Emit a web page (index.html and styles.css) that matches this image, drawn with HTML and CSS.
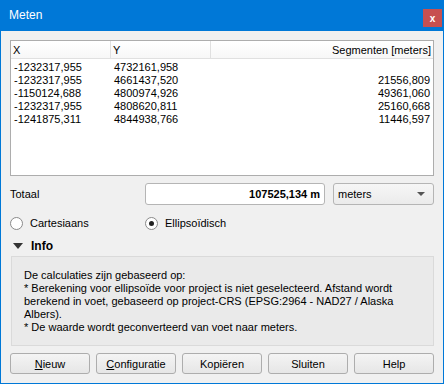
FILE: index.html
```html
<!DOCTYPE html>
<html>
<head>
<meta charset="utf-8">
<link rel="stylesheet" href="styles.css">
</head>
<body>
<div class="window">
  <div class="titlebar">
    <span class="title">Meten</span>
    <span class="close">x</span>
  </div>
  <div class="content">
    <div class="table">
      <div class="thead">
        <div class="th c1">X</div>
        <div class="th c2">Y</div>
        <div class="th c3">Segmenten [meters]</div>
      </div>
      <div class="tbody">
        <div class="tr"><div class="td c1">-1232317,955</div><div class="td c2">4732161,958</div><div class="td c3"></div></div>
        <div class="tr"><div class="td c1">-1232317,955</div><div class="td c2">4661437,520</div><div class="td c3">21556,809</div></div>
        <div class="tr"><div class="td c1">-1150124,688</div><div class="td c2">4800974,926</div><div class="td c3">49361,060</div></div>
        <div class="tr"><div class="td c1">-1232317,955</div><div class="td c2">4808620,811</div><div class="td c3">25160,668</div></div>
        <div class="tr"><div class="td c1">-1241875,311</div><div class="td c2">4844938,766</div><div class="td c3">11446,597</div></div>
      </div>
    </div>

    <div class="total-row">
      <span class="total-label">Totaal</span>
      <div class="total-box">107525,134 m</div>
      <div class="combo"><span>meters</span><span class="arrow"></span></div>
    </div>

    <div class="radio-row">
      <label class="radio r1"><span class="circle"></span>Cartesiaans</label>
      <label class="radio"><span class="circle checked"></span>Ellipsoïdisch</label>
    </div>

    <div class="info-head"><span class="tri"></span><span class="info-title">Info</span></div>
    <div class="info-box">
      De calculaties zijn gebaseerd op:<br>
      * Berekening voor ellipsoïde voor project is niet geselecteerd. Afstand wordt berekend in voet, gebaseerd op project-CRS (EPSG:2964 - NAD27 / Alaska Albers).<br>
      * De waarde wordt geconverteerd van voet naar meters.
    </div>

    <div class="buttons">
      <button class="btn"><u>N</u>ieuw</button>
      <button class="btn"><u>C</u>onfiguratie</button>
      <button class="btn">Kopiëren</button>
      <button class="btn">Sluiten</button>
      <button class="btn">Help</button>
    </div>
  </div>
</div>
</body>
</html>
```
FILE: styles.css
```css
html, body {
  margin: 0;
  padding: 0;
  background: #f0f0f0;
}
body {
  font-family: "Liberation Sans", Arial, sans-serif;
  font-size: 11px;
  color: #000;
}
.window {
  width: 444px;
  height: 384px;
  box-sizing: border-box;
  border: 1px solid #0078d7;
  border-top: none;
  background: #f0f0f0;
  display: flex;
  flex-direction: column;
}
.titlebar {
  height: 31px;
  background: #0078d7;
  margin: 0 -1px;
  position: relative;
  display: flex;
  align-items: center;
}
.title {
  color: #fff;
  font-size: 12px;
  margin-left: 9px;
  margin-top: -1px;
}
.close {
  position: absolute;
  left: 423px;
  top: 9px;
  width: 19px;
  height: 18px;
  background: #c75050;
  color: #fff;
  font-weight: bold;
  font-size: 10px;
  display: flex;
  align-items: center;
  justify-content: center;
}
.content {
  padding: 9px 9px 0 9px;
  display: flex;
  flex-direction: column;
}
.table {
  height: 136px;
  box-sizing: border-box;
  border: 1px solid #adadad;
  background: #fff;
  width: 424px;
}
.thead {
  display: flex;
  height: 17px;
  border-bottom: 1px solid #e0e0e0;
  background: linear-gradient(#ffffff, #f7f7f7);
}
.th {
  box-sizing: border-box;
  padding: 3px 3px 0 2px;
  border-right: 1px solid #e0e0e0;
  line-height: 13px;
}
.c1 { width: 100px; }
.c2 { width: 100px; }
.c3 { flex: 1; text-align: right; }
.th.c3 { border-right: none; padding-right: 2px; }
.tbody { padding-top: 2px; }
.tr { display: flex; height: 13px; line-height: 13px; }
.td { box-sizing: border-box; padding-left: 3px; }
.td.c3 { padding-right: 3px; }

.total-row {
  display: flex;
  align-items: center;
  margin-top: 7px;
  height: 22px;
}
.total-label {
  width: 135px;
}
.total-box {
  width: 180px;
  height: 22px;
  box-sizing: border-box;
  border: 1px solid #b5b5b5;
  border-radius: 3px;
  background: #fff;
  font-weight: bold;
  text-align: right;
  padding-right: 4px;
  line-height: 20px;
}
.combo {
  margin-left: 8px;
  width: 101px;
  height: 22px;
  box-sizing: border-box;
  border: 1px solid #b5b5b5;
  border-radius: 3px;
  background: linear-gradient(#f6f6f6, #ebebeb);
  display: flex;
  align-items: center;
  justify-content: space-between;
  padding: 0 8px 0 4px;
}
.arrow {
  width: 0;
  height: 0;
  border-left: 4px solid transparent;
  border-right: 4px solid transparent;
  border-top: 4px solid #555;
}
.radio-row {
  display: flex;
  align-items: center;
  margin-top: 11px;
  height: 14px;
}
.radio {
  display: flex;
  align-items: center;
}
.r1 { width: 135px; }
.circle {
  width: 13px;
  height: 13px;
  box-sizing: border-box;
  border-radius: 50%;
  border: 1px solid #8a8a8a;
  background: #fff;
  margin-right: 7px;
  margin-left: 0;
  position: relative;
}
.checked::after {
  content: "";
  position: absolute;
  left: 3px;
  top: 3px;
  width: 5px;
  height: 5px;
  border-radius: 50%;
  background: #222;
}
.info-head {
  display: flex;
  align-items: center;
  margin-top: 9px;
  height: 14px;
}
.tri {
  width: 0;
  height: 0;
  border-left: 5px solid transparent;
  border-right: 5px solid transparent;
  border-top: 6px solid #333;
  margin-left: 3px;
  margin-right: 8px;
}
.info-title {
  font-weight: bold;
  font-size: 12px;
  font-family: "Liberation Sans", Arial, sans-serif;
}
.info-box {
  margin-top: 3px;
  margin-left: 1px;
  height: 90px;
  box-sizing: border-box;
  border: 1px solid #dadada;
  background: #eaeaea;
  padding: 12px 12px 0 12px;
  line-height: 13px;
  width: 423px;
}
.buttons {
  display: flex;
  gap: 6px;
  margin-top: 7px;
}
.btn {
  width: 80px;
  height: 21px;
  box-sizing: border-box;
  border: 1px solid #adadad;
  border-radius: 3px;
  background: linear-gradient(#f4f4f4, #e6e6e6);
  font-family: "Liberation Sans", Arial, sans-serif;
  font-size: 11px;
  color: #000;
  padding: 0;
}
.btn u { text-decoration: underline; }
```
